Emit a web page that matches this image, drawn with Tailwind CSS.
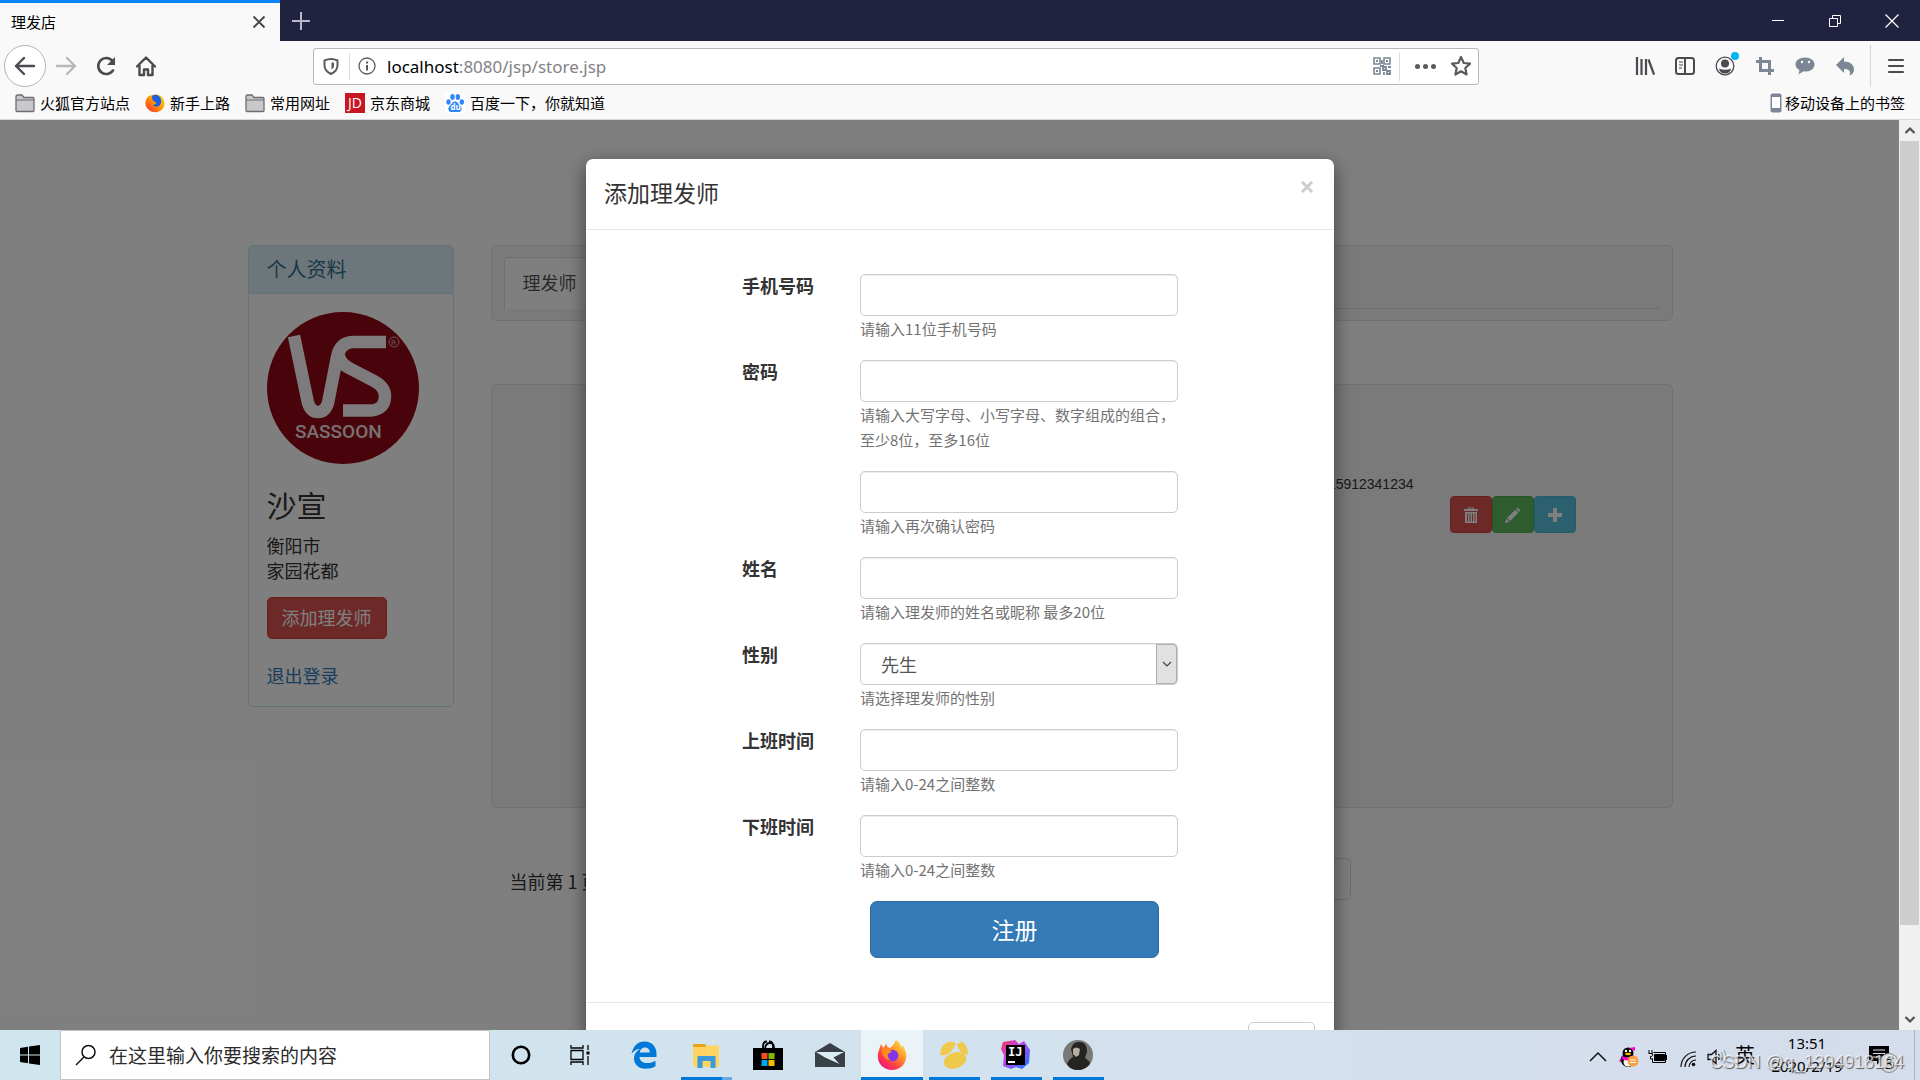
<!DOCTYPE html>
<html lang="zh-CN">
<head>
<meta charset="utf-8">
<title>理发店</title>
<script src="https://cdn.jsdelivr.net/npm/@tailwindcss/browser@4"></script>
</head>
<body class="flex h-screen flex-col overflow-hidden bg-white font-['Noto_Sans_CJK_SC',sans-serif] text-[15px] text-[#333]">

<svg class="absolute size-0" aria-hidden="true">
  <defs>
    <linearGradient id="flame" x1="1" y1="0" x2="0.2" y2="1"><stop offset="0" stop-color="#fff44f"/><stop offset=".4" stop-color="#ff9a2a"/><stop offset=".75" stop-color="#ff3b4a"/><stop offset="1" stop-color="#e31587"/></linearGradient>
    <linearGradient id="oldflame" x1="1" y1="0" x2="0" y2="1"><stop offset="0" stop-color="#ffe226"/><stop offset=".5" stop-color="#ff9400"/><stop offset="1" stop-color="#ff1a3c"/></linearGradient>
    <linearGradient id="ij" x1="0" y1="0" x2="1" y2="1"><stop offset="0" stop-color="#fe315d"/><stop offset=".45" stop-color="#b74af7"/><stop offset="1" stop-color="#087cfa"/></linearGradient>
    <symbol id="folder" viewBox="0 0 20 20"><path d="M1 17.500V3.500Q1 2 2.500 2H7l2 2.500h9q1 0 1 1v12q0 1-1 1H2q-1 0-1-1z" fill="#c9c9cb" stroke="#6d6d6f" stroke-width="1.300"/><path d="M1 7h18" stroke="#6d6d6f"/></symbol>
  </defs>
</svg>

<!-- Browser window frame -->
<header class="shrink-0 bg-[#f9f9fa] text-black">
  <div class="flex h-[41px] bg-[#20223f]">
    <div class="flex w-[280px] items-center justify-between border-t-[3px] border-[#0a84ff] bg-[#f9f9fa] pr-3 pl-[11px]">
      <span class="leading-5">理发店</span>
      <button aria-label="关闭标签页"><svg class="size-[18px]" viewBox="0 0 18 18" fill="none" stroke="#444" stroke-width="1.800"><path d="M3.500 3.500l11 11M14.500 3.500l-11 11"/></svg></button>
    </div>
    <button class="flex w-[42px] items-center justify-center" aria-label="新标签页"><svg class="size-5" viewBox="0 0 20 20" stroke="#b9bac8" stroke-width="2"><path d="M10 1v18M1 10h18"/></svg></button>
    <div class="ml-auto flex">
      <button class="flex w-[57px] items-center justify-center" aria-label="最小化"><svg class="size-4" viewBox="0 0 16 16" stroke="#fff"><path d="M2 7.500h12"/></svg></button>
      <button class="flex w-[57px] items-center justify-center" aria-label="还原"><svg class="size-4" viewBox="0 0 16 16" fill="none" stroke="#fff"><path d="M2.500 5.500h8v8h-8zM5.500 5V2.500h8v8H11"/></svg></button>
      <button class="flex w-[57px] items-center justify-center" aria-label="关闭"><svg class="size-4" viewBox="0 0 16 16" stroke="#fff" stroke-width="1.200"><path d="M1.500 1.500l13 13M14.500 1.500l-13 13"/></svg></button>
    </div>
  </div>

  <div class="flex h-[50px] items-center">
    <button class="ml-1 flex size-[42px] items-center justify-center rounded-full border border-[#b4b4b6] bg-white" aria-label="后退"><svg class="size-[22px]" viewBox="0 0 22 22" fill="none" stroke="#4a4a4f" stroke-width="2.400" stroke-linecap="round" stroke-linejoin="round"><path d="M20 11H2M10 3L2 11l8 8"/></svg></button>
    <button class="flex w-10 justify-center" aria-label="前进"><svg class="size-[22px]" viewBox="0 0 22 22" fill="none" stroke="#b9b9bb" stroke-width="2.400" stroke-linecap="round" stroke-linejoin="round"><path d="M2 11h18M12 3l8 8-8 8"/></svg></button>
    <button class="flex w-10 justify-center" aria-label="刷新"><svg class="size-[22px]" viewBox="0 0 22 22" fill="none" stroke="#4a4a4f" stroke-width="2.600"><path d="M18.500 14.500A8 8 0 1 1 17.500 6"/><path d="M20 2v8h-8z" fill="#4a4a4f" stroke="none"/></svg></button>
    <button class="flex w-10 justify-center" aria-label="主页"><svg class="size-[22px]" viewBox="0 0 22 22" fill="none" stroke="#4a4a4f" stroke-width="2.400" stroke-linejoin="round" stroke-linecap="round"><path d="M2 11.500L11 2.500l9 9M4.500 10.500V20h4.500v-5.500h4V20h4.500v-9.500"/></svg></button>

    <div class="ml-[147px] flex h-[37px] max-w-[1166px] grow items-center rounded-[3px] border border-[#b8b8ba] bg-white pl-2">
      <svg class="size-[18px]" viewBox="0 0 18 18" fill="none" stroke="#5a5a5e" stroke-width="2"><path d="M2.500 3.500Q9 .5 15.500 3.500V8q0 6-6.500 9Q2.500 14 2.500 8z"/><path d="M9.500 5.500h2.500V9q0 2-2.500 3.500z" fill="#5a5a5e" stroke="none"/></svg>
      <span class="mr-2 ml-[9px] h-[27px] w-px bg-[#dedede]"></span>
      <svg class="size-[18px]" viewBox="0 0 18 18" fill="none" stroke="#5a5a5e" stroke-width="1.300"><circle cx="9" cy="9" r="8"/><path d="M9 8v5.500M9 4.500v2" stroke-width="2"/></svg>
      <label for="url" class="sr-only">地址</label>
      <div class="relative ml-[11px] grow font-['Noto_Sans',sans-serif] text-[17px] leading-[25px]"><input id="url" class="w-full bg-transparent text-[#828286] outline-none" value="localhost:8080/jsp/store.jsp"><span class="pointer-events-none absolute top-0 left-0 bg-white text-black">localhost</span></div>
      <svg class="size-[18px]" viewBox="0 0 18 18" fill="none" stroke="#7b8794" stroke-width="1.600"><path d="M1 1h6v6H1zM11 1h6v6h-6zM1 11h6v6H1z"/><path d="M3 4h2M13 4h2M3 14h2M10 10h3v3h-3zM15 10h3M14 14h3v3h-3zM11 15v3M7 9h4M9 3v4" stroke-width="1.800"/></svg>
      <span class="mx-2 h-[29px] w-px bg-[#dedede]"></span>
      <button class="mx-[7px] flex w-[21px] justify-between" aria-label="页面操作"><i class="size-[5px] rounded-full bg-[#5a5a5e]"></i><i class="size-[5px] rounded-full bg-[#5a5a5e]"></i><i class="size-[5px] rounded-full bg-[#5a5a5e]"></i></button>
      <button class="mr-[6px] ml-[7px]" aria-label="收藏"><svg class="size-[22px]" viewBox="0 0 22 22" fill="none" stroke="#5a5a5e" stroke-width="2.200" stroke-linejoin="round"><path d="M11 2l2.700 6 6.300.7-4.700 4.300 1.300 6.500L11 16.300 5.400 19.500 6.700 13 2 8.700 8.300 8z"/></svg></button>
    </div>

    <div class="ml-auto flex items-center">
      <button class="flex w-10 justify-center" aria-label="书库"><svg class="size-5" viewBox="0 0 20 20" stroke="#4a4a4f" stroke-width="2.200"><path d="M2 1v18M6.500 3v16M11 3v16M13.500 3.500L19 18.500"/></svg></button>
      <button class="flex w-10 justify-center" aria-label="侧栏"><svg class="size-5" viewBox="0 0 20 20" fill="none" stroke="#4a4a4f" stroke-width="2"><rect x="1" y="2" width="18" height="16" rx="2.500"/><path d="M10 2v16"/><path d="M4 6h4M4 9h4M4 12h3" stroke-width="1.200"/></svg></button>
      <button class="relative flex w-10 justify-center" aria-label="账户"><svg class="size-5" viewBox="0 0 20 20" fill="#4a4a4f"><circle cx="10" cy="10" r="8.800" fill="none" stroke="#4a4a4f" stroke-width="1.300"/><circle cx="10" cy="7.500" r="4"/><path d="M4 12.500q6 2.500 12 0-1 5-6 5t-6-5z"/></svg><i class="absolute -top-1 right-[6px] size-2 rounded-full bg-[#00b3f4]"></i></button>
      <button class="flex w-10 justify-center" aria-label="截图"><svg class="size-5" viewBox="0 0 20 20" fill="none" stroke="#7b8794" stroke-width="3"><path d="M5.500 1v13.500H19M1 5.500h13.500V19"/></svg></button>
      <button class="flex w-10 justify-center" aria-label="消息"><svg class="size-5" viewBox="0 0 20 20"><path d="M10 1.500c5.500 0 9.500 3 9.500 7s-4 7-8 7c-1 0-2 0-3-.3L3.500 18.500l1-4.500C2 13 .5 11 .5 8.500c0-4 4-7 9.500-7z" fill="#7b8794"/><circle cx="7" cy="6" r="1.200" fill="#f9f9fa"/><circle cx="14" cy="6" r="1.200" fill="#f9f9fa"/></svg></button>
      <button class="flex w-10 justify-center" aria-label="撤销"><svg class="size-5" viewBox="0 0 20 20" fill="#7b8794"><path d="M9 1v4.500c6 0 10 3 10 8 0 3-1.500 5-4.500 6 1.500-4 0-6.500-5.500-6.500v4L1 9z"/></svg></button>
      <span class="ml-[5px] h-[42px] w-px bg-[#d7d7db]"></span>
      <button class="flex w-[49px] justify-center" aria-label="菜单"><svg class="size-[18px]" viewBox="0 0 18 18" stroke="#4a4a4f" stroke-width="2.200" stroke-linecap="round"><path d="M2 3h14M2 9h14M2 15h14"/></svg></button>
    </div>
  </div>

  <nav class="flex h-[29px] items-center border-b border-[#d8d8da] px-[15px] pb-1 leading-5">
    <a href="#" class="flex items-center gap-[5px]"><svg class="size-5"><use href="#folder"/></svg>火狐官方站点</a>
    <a href="#" class="ml-[15px] flex items-center gap-[5px]"><svg class="size-5" viewBox="0 0 20 20"><path d="M10 1.500q7-1 9 6 2 7-4 10.500-6 3-11-1T1 7q1-3 3-4 2-1 6-1.500z" fill="url(#oldflame)"/><path d="M7 3q4-3 8 1 3 5-1 9-4 2-6-1 4-1 3-3-4 0-4-6z" fill="#1c5fe0"/></svg>新手上路</a>
    <a href="#" class="ml-[15px] flex items-center gap-[5px]"><svg class="size-5"><use href="#folder"/></svg>常用网址</a>
    <a href="#" class="ml-[15px] flex items-center gap-[5px]"><span class="flex size-5 items-center justify-center bg-[#c81623] font-['Open_Sans',sans-serif] text-[14px] text-white">JD</span>京东商城</a>
    <a href="#" class="ml-[15px] flex items-center gap-[5px]"><svg class="size-5 bg-white" viewBox="0 0 20 20" fill="#2f86f6"><ellipse cx="3.500" cy="9" rx="2.200" ry="2.800"/><ellipse cx="7.500" cy="4" rx="2.200" ry="3"/><ellipse cx="12.800" cy="4" rx="2.200" ry="3"/><ellipse cx="16.800" cy="9" rx="2.200" ry="2.800"/><path d="M10 8.500c2.500 0 3 2.500 5 4s2.500 6-1 6.500H6c-3.500-.5-3-5-1-6.500s2.500-4 5-4z"/><text x="5.500" y="17" font-family="Open Sans" font-size="8" font-weight="700" fill="#fff">du</text></svg>百度一下，你就知道</a>
    <a href="#" class="ml-auto flex items-center gap-[3px]"><svg class="h-5 w-3" viewBox="0 0 12 20"><rect x=".5" y=".5" width="11" height="19" rx="2" fill="#7b8794"/><path d="M2 4h8v11H2z" fill="#fff"/></svg>移动设备上的书签</a>
  </nav>
</header>

<!-- Page viewport -->
<div class="relative min-h-0 grow overflow-hidden bg-white">
  <main class="mx-auto flex max-w-[1425px] items-start gap-[37px] pt-[125px] text-[18px] leading-[25px]">
    <section class="w-[206px] shrink-0 rounded-[5px] border border-[#bce8f1]">
      <h2 class="border-b border-[#bce8f1] bg-[#d9edf7] px-[18px] pt-[10px] pb-3 text-[20px] text-[#31708f]">个人资料</h2>
      <div class="px-[18px] py-[18px]">
        <svg class="size-[152px]" viewBox="0 0 152 152" role="img" aria-label="VS Sassoon">
          <circle cx="76" cy="76" r="76" fill="#900814"/>
          <g fill="none" stroke="#fbf6f6" stroke-width="12.500"><path d="M27 24L41 91Q44 100 51 100Q58 100 61 91L70 45Q73 30 87 30H119"/><path d="M72 38Q70 50 82 56L107 69Q118 75 118 84Q118 98 103 98.500H76"/></g>
          <text x="28" y="126" font-family="Roboto" font-size="19" font-weight="500" fill="#f0e0e2">SASSOON</text>
          <circle cx="127" cy="30" r="5" fill="none" stroke="#d9b4b8"/><text x="124" y="33" font-family="Roboto" font-size="8" fill="#d9b4b8">R</text>
        </svg>
        <h3 class="mt-6 text-[30px] leading-[33px]">沙宣</h3>
        <p class="mt-3">衡阳市<br>家园花都</p>
        <button class="mt-[14px] block h-[42px] w-[120px] rounded-[5px] border border-[#d43f3a] bg-[#d9534f] pb-0.5 text-white">添加理发师</button>
        <a href="#" class="mt-6 block text-[#337ab7]">退出登录</a>
      </div>
    </section>

    <div class="grow">
      <nav class="rounded-[5px] border border-[#e3e3e3] bg-[#f5f5f5] px-3 py-[11px]">
        <div class="flex border-b border-[#ddd]"><a href="#" class="-mb-px rounded-t-[5px] border border-b-0 border-[#ddd] bg-white px-[18px] pt-3 pb-[14px] text-[#555]">理发师</a></div>
      </nav>
      <section class="mt-[63px] flex h-[424px] items-start justify-end rounded-[5px] border border-[#e3e3e3] bg-[#f5f5f5] pt-[87px] pr-24">
        <span class="mr-9 font-['Liberation_Sans',sans-serif] text-[14px]">15912341234</span>
        <div class="mt-6 flex text-white">
          <button class="flex h-[37px] w-[42px] items-center justify-center rounded-[4px] border border-[#d43f3a] bg-[#d9534f]" aria-label="删除"><svg class="size-4" viewBox="0 0 16 16" fill="currentColor"><path d="M1 2h4V.5h6V2h4v2H1zM6.500 1.300V2h3v-.7zM2 5h12v11H2z"/><path d="M4.500 6.500v8M7 6.500v8M9.500 6.500v8M12 6.500v8" stroke="#d9534f"/></svg></button>
          <button class="flex h-[37px] w-[42px] items-center justify-center rounded-[4px] border border-[#4cae4c] bg-[#5cb85c]" aria-label="编辑"><svg class="size-4" viewBox="0 0 16 16" fill="currentColor"><path d="M12.500.5l3 3-1.500 1.500-3-3zM10.300 2.700l3 3-8.300 8.300-3-3zM1.300 11.700l3 3L0 16z"/></svg></button>
          <button class="flex h-[37px] w-[42px] items-center justify-center rounded-[4px] border border-[#46b8da] bg-[#5bc0de]" aria-label="添加"><svg class="size-[14px]" viewBox="0 0 14 14" fill="currentColor"><path d="M5 0h4v5h5v4H9v5H5V9H0V5h5z"/></svg></button>
        </div>
      </section>
      <div class="mt-[50px] flex justify-between pr-[322px] pl-[19px]">
        <p class="pt-[11px]">当前第 1 页</p>
        <a href="#" class="h-[42px] rounded-r-[5px] border border-[#ddd] px-[15px] py-2 text-[#337ab7]">末页</a>
      </div>
    </div>
  </main>

  <!-- Dialog over the page -->
  <div class="absolute inset-0 flex items-start justify-center overflow-hidden bg-black/50 pt-[39px]">
    <div role="dialog" aria-labelledby="dialog-title" class="w-[748px] shrink-0 rounded-[7px] bg-white shadow-[0_6px_19px_rgba(0,0,0,0.5)]">
      <div class="flex h-[71px] items-start justify-between border-b border-[#e5e5e5] pt-[18px] pr-5 pl-[18px]">
        <h1 id="dialog-title" class="text-[23px] leading-[30px]">添加理发师</h1>
        <button class="font-['Liberation_Sans',sans-serif] text-[24px] leading-5 font-bold text-[#ccc]" aria-label="关闭">×</button>
      </div>
      <form class="flex flex-col gap-[19px] py-11 pl-[156px] text-[18px] leading-[25px]">
        <div class="grid grid-cols-[118px_318px] items-start">
          <label for="phone" class="leading-[23px] font-bold">手机号码</label>
          <div><input id="phone" class="block h-[42px] w-full rounded-[5px] border border-[#ccc] px-3 shadow-[inset_0_1px_1px_rgba(0,0,0,0.075)]"><p class="text-[15px] text-[#737373]">请输入11位手机号码</p></div>
        </div>
        <div class="grid grid-cols-[118px_318px] items-start">
          <label for="pw" class="leading-[23px] font-bold">密码</label>
          <div><input id="pw" type="password" class="block h-[42px] w-full rounded-[5px] border border-[#ccc] px-3 shadow-[inset_0_1px_1px_rgba(0,0,0,0.075)]"><p class="text-[15px] text-[#737373]">请输入大写字母、小写字母、数字组成的组合，<br>至少8位，至多16位</p></div>
        </div>
        <div class="grid grid-cols-[118px_318px] items-start">
          <span></span>
          <div><input aria-label="确认密码" type="password" class="block h-[42px] w-full rounded-[5px] border border-[#ccc] px-3 shadow-[inset_0_1px_1px_rgba(0,0,0,0.075)]"><p class="text-[15px] text-[#737373]">请输入再次确认密码</p></div>
        </div>
        <div class="grid grid-cols-[118px_318px] items-start">
          <label for="name" class="leading-[23px] font-bold">姓名</label>
          <div><input id="name" class="block h-[42px] w-full rounded-[5px] border border-[#ccc] px-3 shadow-[inset_0_1px_1px_rgba(0,0,0,0.075)]"><p class="text-[15px] text-[#737373]">请输入理发师的姓名或昵称 最多20位</p></div>
        </div>
        <div class="grid grid-cols-[118px_318px] items-start">
          <label for="sex" class="leading-[23px] font-bold">性别</label>
          <div>
            <div class="relative">
              <select id="sex" class="block h-[42px] w-full appearance-none rounded-[5px] border border-[#ccc] bg-white px-5 text-[#555] shadow-[inset_0_1px_1px_rgba(0,0,0,0.075)]"><option>先生</option><option>女士</option></select>
              <span class="pointer-events-none absolute inset-y-px right-px flex w-[21px] items-center justify-center rounded-r-[4px] border border-[#adadad] bg-[#e1e1e1]"><svg class="size-[10px]" viewBox="0 0 10 10" fill="none" stroke="#444" stroke-width="1.200"><path d="M1 3l4 4 4-4"/></svg></span>
            </div>
            <p class="text-[15px] text-[#737373]">请选择理发师的性别</p>
          </div>
        </div>
        <div class="grid grid-cols-[118px_318px] items-start">
          <label for="start" class="leading-[23px] font-bold">上班时间</label>
          <div><input id="start" class="block h-[42px] w-full rounded-[5px] border border-[#ccc] px-3 shadow-[inset_0_1px_1px_rgba(0,0,0,0.075)]"><p class="text-[15px] text-[#737373]">请输入0-24之间整数</p></div>
        </div>
        <div class="grid grid-cols-[118px_318px] items-start">
          <label for="end" class="leading-[23px] font-bold">下班时间</label>
          <div><input id="end" class="block h-[42px] w-full rounded-[5px] border border-[#ccc] px-3 shadow-[inset_0_1px_1px_rgba(0,0,0,0.075)]"><p class="text-[15px] text-[#737373]">请输入0-24之间整数</p></div>
        </div>
        <button type="button" class="ml-32 h-[57px] w-[289px] rounded-[7px] border border-[#2e6da4] bg-[#337ab7] text-[23px] text-white">注册</button>
      </form>
      <div class="flex justify-end border-t border-[#e5e5e5] p-[19px]">
        <button class="h-[42px] w-[67px] rounded-[5px] border border-[#ccc] bg-white text-[18px]">关闭</button>
      </div>
    </div>
  </div>

  <div class="absolute inset-y-0 right-0 flex w-[21px] flex-col items-center bg-[#f0f0f0]">
    <svg class="h-[21px] w-3 shrink-0" viewBox="0 0 12 21" fill="none" stroke="#505050" stroke-width="2.200"><path d="M1.500 13L6 8.500l4.500 4.500"/></svg>
    <div class="h-[784px] w-[19px] shrink-0 bg-[#cdcdcd]"></div>
    <svg class="mt-auto h-[21px] w-3 shrink-0" viewBox="0 0 12 21" fill="none" stroke="#505050" stroke-width="2.200"><path d="M1.500 8L6 12.500 10.500 8"/></svg>
  </div>
</div>

<!-- Desktop taskbar -->
<footer class="relative flex h-[50px] shrink-0 bg-linear-to-r from-[#cfe6ee] via-[#d2e2ee] to-[#d5dceb] text-black">
  <button class="flex w-[60px] items-center justify-center" aria-label="开始"><svg class="size-5" viewBox="0 0 20 20"><path d="M0 3l8-1.200v7.700H0zM9 1.600L20 0v9.500H9zM0 10.500h8v7.700L0 17zM9 10.500h11V20L9 18.400z"/></svg></button>
  <div class="flex w-[430px] items-center gap-3 border border-[#c4c4c4] bg-white pl-[14px]">
    <svg class="size-[22px]" viewBox="0 0 22 22" fill="none" stroke="#111" stroke-width="1.500"><circle cx="13.500" cy="8" r="6.500"/><path d="M9 13l-8 8"/></svg>
    <input aria-label="搜索" class="grow text-[19px] outline-none placeholder:text-[#2b2b2b]" placeholder="在这里输入你要搜索的内容">
  </div>
  <button class="flex w-[61px] items-center justify-center" aria-label="Cortana"><svg class="size-5" viewBox="0 0 20 20" fill="none" stroke="#000" stroke-width="2.600"><circle cx="10" cy="10" r="8.200"/></svg></button>
  <button class="flex w-[62px] items-center justify-center pr-1" aria-label="任务视图"><svg class="size-5" viewBox="0 0 20 20" fill="none" stroke="#000" stroke-width="1.300"><path d="M1 5.500h12v9H1zM1 0v3h12V0M1 20v-3h12v3M18 0v5M18 11v9"/><path d="M16.500 6.500h3v3h-3z" fill="#000" stroke="none"/></svg></button>
  <button class="flex w-[62px] items-center justify-center" aria-label="Edge"><svg class="size-7" viewBox="0 0 28 28" fill="#0078d7"><path d="M1.500 13C3 5 8 .5 14.500.5 22 .5 26.500 6 26.500 12.500V16H9.500c.3 4 3.500 6 7.500 6 3 0 6-.8 8.500-2.300v5.500C22.500 27 19 27.700 15.500 27.700 8.500 27.700 4 23.500 4 17.500c0-4 2-7.500 6-9.500C6 8 3.500 10 1.500 13zM9.800 11.500h10c0-3-1.700-5-4.800-5s-5 2-5.200 5z"/></svg></button>
  <button class="relative flex w-[62px] items-center justify-center" aria-label="资源管理器"><svg class="h-[26px] w-7" viewBox="0 0 28 26"><path d="M1 2h12l2 3H1z" fill="#e8a31a"/><path d="M1 5h12l2-1.500h12V25H1z" fill="#ffd463"/><path d="M5.500 14H23.500v12h-5v-7h-8v7h-5z" fill="#3c99dc"/></svg><i class="absolute bottom-0 left-[6px] h-[3px] w-[41px] bg-[#0078d7]"></i><i class="absolute bottom-0 left-[47px] h-[3px] w-[10px] bg-[#66a9e2]"></i></button>
  <button class="flex w-[62px] items-center justify-center" aria-label="应用商店"><svg class="size-[30px]" viewBox="0 0 30 30"><path d="M0 8h30v22H0z"/><path d="M10 9V6Q10 1.500 14 1.500M20 9V6Q20 1.500 16 1.500M12 8Q13 3 17 3t4 5" fill="none" stroke="#000" stroke-width="1.800"/><path d="M8.500 13h6v6h-6z" fill="#f25022"/><path d="M15.500 13h6v6h-6z" fill="#7fba00"/><path d="M8.500 20h6v6h-6z" fill="#00a4ef"/><path d="M15.500 20h6v6h-6z" fill="#ffb900"/></svg></button>
  <button class="flex w-[62px] items-center justify-center" aria-label="邮件"><svg class="h-[26px] w-[30px]" viewBox="0 0 30 26"><path d="M0 10L15 1l15 9v15H0z" fill="#3a4146"/><path d="M1 10h28l-10.500 5.500 6 6.500L10 15.500z" fill="#dcecf4"/></svg></button>
  <button class="relative flex w-[62px] items-center justify-center bg-[#eaf3f8]" aria-label="Firefox"><svg class="size-[30px]" viewBox="0 0 30 30"><path d="M19 0c4 3 5 5 5.500 8.500C25 7 25 6 25 5c3 3.500 4.500 8 4.300 12C28.500 25 22.500 30 15 30S.8 24.500.8 16.500C.8 11 3 8 4 4l2.500 4Q8 4.500 9.500 3.500c0 2 1 3.500 3.500 4.500Q17 5 19 0z" fill="url(#flame)"/><circle cx="15.500" cy="15.500" r="5.800" fill="#8035e8"/><path d="M6 8q4 0 6.500 1.500L15 12q-2.500.5-4 2-1 4 3 6-6 0-8-5t0-7z" fill="#ff8a1e"/></svg><i class="absolute inset-x-0 bottom-0 h-[3px] bg-[#0078d7]"></i></button>
  <button class="relative flex w-[62px] items-center justify-center" aria-label="Navicat"><svg class="size-7" viewBox="0 0 28 28" fill="#efc94c"><ellipse cx="15" cy="19.500" rx="11.500" ry="8" transform="rotate(-18 15 19.500)"/><path d="M0 14C0 7 4 2 9 1q5-1 7 2-2 4-5.500 8T0 14zM17 3l5-2.500c5 4 6.500 9 5.500 13.500-5-1-9-4-10.500-11z"/></svg><i class="absolute bottom-0 left-[6px] h-[3px] w-[51px] bg-[#0078d7]"></i></button>
  <button class="relative flex w-[62px] items-center justify-center" aria-label="IntelliJ IDEA"><svg class="size-[30px]" viewBox="0 0 30 30"><path d="M2 2l12-2 4 4 5-3 6 9-1 13-7 6-6-2-5 2-8-3L3 15 0 9z" fill="url(#ij)"/><path d="M5 5h19v20H5z"/><text x="7" y="16" font-family="DejaVu Sans Mono" font-weight="700" font-size="12" fill="#fff">IJ</text><path d="M7 21h7v2H7z" fill="#fff"/></svg><i class="absolute bottom-0 left-[6px] h-[3px] w-[51px] bg-[#0078d7]"></i></button>
  <button class="relative flex w-[62px] items-center justify-center" aria-label="应用"><svg class="size-[30px]" viewBox="0 0 30 30"><circle cx="15" cy="15" r="15" fill="#777a74"/><path d="M8 9q2-8 9-7 7 0 7 10l-2 6q5 3 5 6-5 6-12 6-8 0-11-6 2-5 6-7z" fill="#262421"/><path d="M10 9q3-3 7 0l-1 6-3 2-3-3z" fill="#b5aca2"/></svg><i class="absolute bottom-0 left-[6px] h-[3px] w-[51px] bg-[#0078d7]"></i></button>

  <div class="ml-auto flex items-center">
    <svg class="mt-1 h-4 w-[18px]" viewBox="0 0 18 16" fill="none" stroke="#111" stroke-width="1.500"><path d="M1 12l8-8 8 8"/></svg>
    <svg class="mt-1 ml-3 size-5" viewBox="0 0 20 20"><path d="M3 8l-3 7 4-1z" fill="#d900c0"/><ellipse cx="9" cy="13" rx="7" ry="7"/><circle cx="9" cy="6" r="5.500"/><ellipse cx="9" cy="15" rx="4.500" ry="4.500" fill="#fff"/><path d="M3 9q6 3 12 0v3q-6 3-12 0zM10 1l6-1v4z" fill="#f0c"/><ellipse cx="9" cy="7" rx="3" ry="1.300" fill="#fb0"/><circle cx="7" cy="4" r="1.200" fill="#fff"/><circle cx="11" cy="4" r="1.200" fill="#fff"/><circle cx="14" cy="14" r="5.500" fill="#ff9c3c"/><path d="M11 13h6M11 15.500h6" stroke="#fff"/></svg>
    <svg class="mt-1 ml-[9px] h-4 w-5" viewBox="0 0 20 16" fill="none" stroke="#000"><path d="M6.500 5.500h10v6h-10z" fill="#000"/><path d="M18.500 6v5M5.500 3.500h12v10h-13v-4M1 1v3M4 1v3M.5 4.500h4v2q-2 2-2 1V10h2"/></svg>
    <svg class="mt-2 ml-3 size-4" viewBox="0 0 16 16" fill="none" stroke="#111" stroke-width="1.200"><path d="M1 16A15 15 0 0 1 16 1M5 16A11 11 0 0 1 16 5M9 16a7 7 0 0 1 7-7"/><circle cx="13.500" cy="13.500" r="1.800" fill="#111" stroke="none"/></svg>
    <svg class="mt-1 ml-[11px] h-4 w-5" viewBox="0 0 20 16" fill="none" stroke="#111" stroke-width="1.300"><path d="M1 5.500h3.500L9 1.500v13l-4.500-4H1z"/><path d="M11.500 5q2 3 0 6"/><path d="M14 3q3.500 5 0 10M17 1q4 7 0 14" stroke="#9aa"/></svg>
    <span class="ml-2 w-5 text-[20px] leading-6">英</span>
    <div class="ml-3 w-[80px] text-center font-['Noto_Sans',sans-serif] text-[15px] leading-[23px]"><div>13:51</div><div>2020/2/19</div></div>
    <div class="relative ml-[22px] w-[45px]"><svg class="size-5" viewBox="0 0 20 20"><path d="M0 1h20v15h-8l-4 3.500V16H0z"/><path d="M4 5h12M4 8.500h12M4 12h8" stroke="#dde"/></svg><span class="absolute top-2 left-[10px] flex size-5 items-center justify-center rounded-full border border-[#8a8a8a] bg-[#d5d8de] font-['Open_Sans',sans-serif] text-[14px]">3</span></div>
    <span class="mr-[5px] h-[50px] w-px bg-[#a9b0be]"></span>
  </div>
  <span class="pointer-events-none absolute right-4 bottom-1 font-['Liberation_Sans',sans-serif] text-[18px] leading-7 text-white/70 [text-shadow:1px_1px_1px_rgba(60,60,60,0.8)]">CSDN @q_1394918164</span>
</footer>
</body>
</html>
